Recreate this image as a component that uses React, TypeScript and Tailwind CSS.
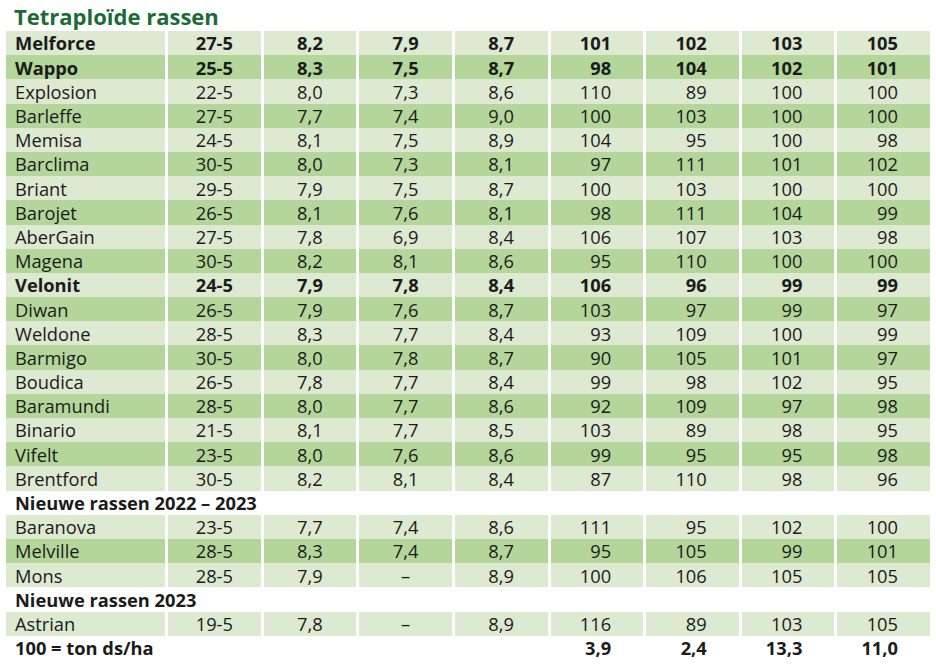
import React from "react";

type Row = { name: string; d: string; v: string[]; bold?: boolean; dark?: boolean };

const rows: Row[] = [
  { name: "Melforce", d: "27-5", v: ["8,2", "7,9", "8,7", "101", "102", "103", "105"], bold: true },
  { name: "Wappo", d: "25-5", v: ["8,3", "7,5", "8,7", "98", "104", "102", "101"], bold: true, dark: true },
  { name: "Explosion", d: "22-5", v: ["8,0", "7,3", "8,6", "110", "89", "100", "100"] },
  { name: "Barleffe", d: "27-5", v: ["7,7", "7,4", "9,0", "100", "103", "100", "100"], dark: true },
  { name: "Memisa", d: "24-5", v: ["8,1", "7,5", "8,9", "104", "95", "100", "98"] },
  { name: "Barclima", d: "30-5", v: ["8,0", "7,3", "8,1", "97", "111", "101", "102"], dark: true },
  { name: "Briant", d: "29-5", v: ["7,9", "7,5", "8,7", "100", "103", "100", "100"] },
  { name: "Barojet", d: "26-5", v: ["8,1", "7,6", "8,1", "98", "111", "104", "99"], dark: true },
  { name: "AberGain", d: "27-5", v: ["7,8", "6,9", "8,4", "106", "107", "103", "98"] },
  { name: "Magena", d: "30-5", v: ["8,2", "8,1", "8,6", "95", "110", "100", "100"], dark: true },
  { name: "Velonit", d: "24-5", v: ["7,9", "7,8", "8,4", "106", "96", "99", "99"], bold: true },
  { name: "Diwan", d: "26-5", v: ["7,9", "7,6", "8,7", "103", "97", "99", "97"], dark: true },
  { name: "Weldone", d: "28-5", v: ["8,3", "7,7", "8,4", "93", "109", "100", "99"] },
  { name: "Barmigo", d: "30-5", v: ["8,0", "7,8", "8,7", "90", "105", "101", "97"], dark: true },
  { name: "Boudica", d: "26-5", v: ["7,8", "7,7", "8,4", "99", "98", "102", "95"] },
  { name: "Baramundi", d: "28-5", v: ["8,0", "7,7", "8,6", "92", "109", "97", "98"], dark: true },
  { name: "Binario", d: "21-5", v: ["8,1", "7,7", "8,5", "103", "89", "98", "95"] },
  { name: "Vifelt", d: "23-5", v: ["8,0", "7,6", "8,6", "99", "95", "95", "98"], dark: true },
  { name: "Brentford", d: "30-5", v: ["8,2", "8,1", "8,4", "87", "110", "98", "96"] },
];

const rows2: Row[] = [
  { name: "Baranova", d: "23-5", v: ["7,7", "7,4", "8,6", "111", "95", "102", "100"] },
  { name: "Melville", d: "28-5", v: ["8,3", "7,4", "8,7", "95", "105", "99", "101"], dark: true },
  { name: "Mons", d: "28-5", v: ["7,9", "–", "8,9", "100", "106", "105", "105"] },
];

const rows3: Row[] = [
  { name: "Astrian", d: "19-5", v: ["7,8", "–", "8,9", "116", "89", "103", "105"] },
];

const grid = "grid grid-cols-[159px_repeat(8,minmax(0,1fr))] gap-x-[3px] h-[24.2px]";

function DataRow({ r }: { r: Row }) {
  const bg = r.dark ? "bg-[#b4d69b]" : "bg-[#dde9d1]";
  const fw = r.bold ? "font-bold" : "font-normal";
  return (
    <div className={`${grid} ${fw}`}>
      <div className={`${bg} pl-[9px] pt-[1px] flex items-center`}>{r.name}</div>
      <div className={`${bg} pt-[1px] flex items-center justify-center`}>{r.d}</div>
      {r.v.map((x, i) =>
        i < 3 ? (
          <div key={i} className={`${bg} pt-[1px] flex items-center justify-center`}>
            {x}
          </div>
        ) : (
          <div key={i} className={`${bg} pt-[1px] flex items-center justify-end pr-[32px]`}>
            {x}
          </div>
        )
      )}
    </div>
  );
}

function SectionRow({ label }: { label: string }) {
  return (
    <div className="h-[24.2px] pt-[1px] flex items-center pl-[9px] font-bold">{label}</div>
  );
}

export default function App() {
  return (
    <div
      className="w-[936px] h-[669px] bg-white text-[#1b1b1b] text-[18.3px] leading-none overflow-hidden"
      style={{ fontFamily: '"Open Sans", sans-serif' }}
    >
      <div className="h-[31px] flex items-center pl-[14px] text-[22px] font-bold text-[#1c6b34]">
        Tetraploïde rassen
      </div>
      <div className="px-[6px]">
        {rows.map((r) => (
          <DataRow key={r.name} r={r} />
        ))}
        <SectionRow label="Nieuwe rassen 2022 – 2023" />
        {rows2.map((r) => (
          <DataRow key={r.name} r={r} />
        ))}
        <SectionRow label="Nieuwe rassen 2023" />
        {rows3.map((r) => (
          <DataRow key={r.name} r={r} />
        ))}
        <div className={`${grid} font-bold`}>
          <div className="col-span-5 pl-[9px] pt-[1px] flex items-center">100 = ton ds/ha</div>
          {["3,9", "2,4", "13,3", "11,0"].map((x) => (
            <div key={x} className="pt-[1px] flex items-center justify-end pr-[32px]">
              {x}
            </div>
          ))}
        </div>
      </div>
    </div>
  );
}
